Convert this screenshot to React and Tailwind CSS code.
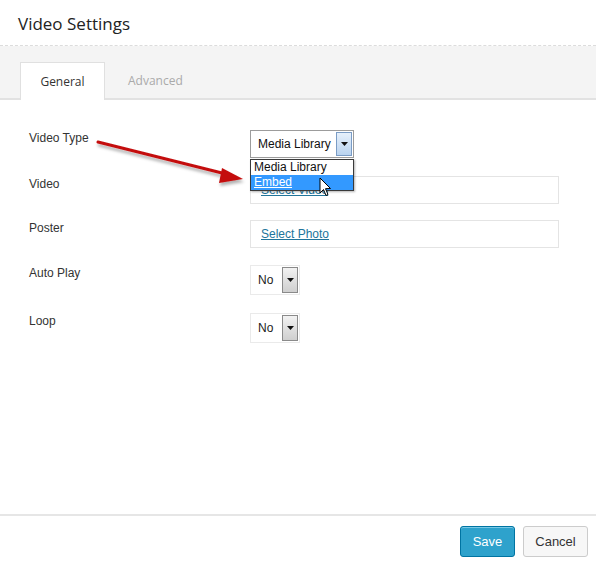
import { useState } from 'react'

const Arrow = ({ tone = 'blue' }) => (
  <span
    className={
      tone === 'blue'
        ? 'flex items-center justify-center w-[16px] self-stretch border border-[#7a9cc5] bg-gradient-to-b from-[#e6f0fb] to-[#b9d3ef]'
        : 'flex items-center justify-center w-[16px] self-stretch border border-[#8a8a8a] bg-gradient-to-b from-[#f2f2f2] to-[#cfcfcf]'
    }
  >
    <svg width="7" height="4" viewBox="0 0 7 4">
      <path d="M0 0h7L3.5 4z" fill="#111" />
    </svg>
  </span>
)

const SmallSelect = () => (
  <div className="flex items-stretch w-[50px] h-[30px] border border-[#eaeaea] bg-white p-px">
    <span className="flex-1 flex items-center pl-[6px] text-[12px] text-[#222]">No</span>
    <Arrow tone="grey" />
  </div>
)

const Row = ({ label, children, className }) => (
  <div className={'flex items-start ' + (className || '')}>
    <div className="w-[250px] shrink-0 pl-[29px] -mt-[1px] text-[12px] text-[#333]">{label}</div>
    <div className="flex-1">{children}</div>
  </div>
)

export default function App() {
  const [tab] = useState('general')

  return (
    <div className="relative w-[596px] h-[565px] bg-white overflow-hidden" style={{ fontFamily: '"Liberation Sans", Arial, sans-serif' }}>
      <div className="h-[46px] pl-[18px] pt-[11px] border-b border-dashed border-[#dcdcdc]">
        <h1 className="text-[17px] text-[#222]" style={{ fontFamily: '"Open Sans", sans-serif' }}>Video Settings</h1>
      </div>

      <div className="h-[54px] bg-[#f4f4f4] border-b-2 border-[#e2e2e2] flex items-end pl-[20px]" style={{ fontFamily: '"Open Sans", sans-serif' }}>
        <div className={'w-[85px] h-[38px] -mb-[2px] flex items-center justify-center text-[12px] border border-b-0 border-[#e0e0e0] ' + (tab === 'general' ? 'bg-white text-[#333]' : 'text-[#aaa]')}>
          General
        </div>
        <div className="h-[38px] -mb-[2px] flex items-center pl-[23px] text-[12px] text-[#aaa]">Advanced</div>
      </div>

      <div className="pt-[30px]">
        <Row label="Video Type">
          <div className="flex items-stretch w-[104px] h-[28px] border border-[#9c9c9c] bg-white p-px">
            <span className="flex-1 flex items-center pl-[6px] text-[12px] text-[#111]">Media Library</span>
            <Arrow />
          </div>
        </Row>

        <Row label="Video" className="mt-[18px]">
          <div className="w-[309px] h-[28px] border border-[#e4e4e4] flex items-center pl-[10px] text-[12px]">
            <a className="text-[#21759b] underline">Select Video</a>
          </div>
        </Row>

        <Row label="Poster" className="mt-[16px]">
          <div className="w-[309px] h-[28px] border border-[#e4e4e4] flex items-center pl-[10px] text-[12px]">
            <a className="text-[#21759b] underline">Select Photo</a>
          </div>
        </Row>

        <Row label="Auto Play" className="mt-[17px]">
          <SmallSelect />
        </Row>

        <Row label="Loop" className="mt-[18px]">
          <SmallSelect />
        </Row>
      </div>

      <div className="absolute left-0 right-0 top-[514px] border-t-2 border-[#e6e6e6] flex justify-end gap-[8px] pt-[10px] pr-[8px]">
        <button className="w-[55px] h-[31px] rounded-[3px] bg-[#2ea2cc] border border-[#0074a2] text-white text-[13px] shadow-[inset_0_1px_0_#78c8e6]">Save</button>
        <button className="w-[65px] h-[31px] rounded-[3px] bg-[#f7f7f7] border border-[#cccccc] text-[#333] text-[13px]">Cancel</button>
      </div>

      {/* open dropdown list */}
      <div className="absolute left-[250px] top-[159px] w-[104px] border border-[#3a3a3a] bg-white text-[12px] shadow-[1px_1px_2px_rgba(0,0,0,0.3)]">
        <div className="h-[15px] leading-[15px] pl-[3px] text-[#111]">Media Library</div>
        <div className="h-[15px] leading-[15px] pl-[3px] bg-[#3399ff] text-white underline">Embed</div>
      </div>

      {/* annotation arrow */}
      <svg className="absolute left-0 top-0 pointer-events-none" width="596" height="565">
        <defs>
          <filter id="sh" x="-10%" y="-50%" width="130%" height="250%">
            <feDropShadow dx="1" dy="3" stdDeviation="1.5" floodColor="#000" floodOpacity="0.3" />
          </filter>
        </defs>
        <g filter="url(#sh)">
          <line x1="98" y1="142" x2="226" y2="174" stroke="#c4100f" strokeWidth="3" strokeLinecap="round" />
          <path d="M243 179 L222 168 L219 183 Z" fill="#c4100f" />
        </g>
        {/* mouse cursor */}
        <path d="M320 178 L320 193 L323.5 189.5 L326 195.5 L328 194.5 L325.5 188.7 L330.5 188.5 Z" fill="#fff" stroke="#000" strokeWidth="1" strokeLinejoin="round" />
      </svg>
    </div>
  )
}
